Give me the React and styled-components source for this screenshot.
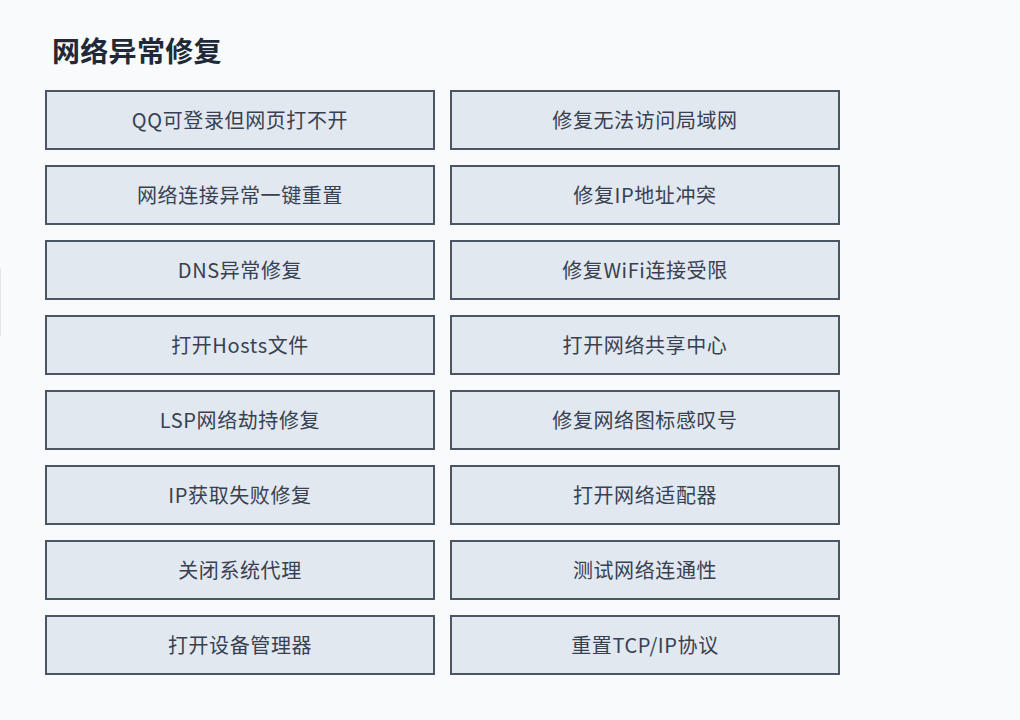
import React from "react";
import styled, { createGlobalStyle } from "styled-components";

const GlobalStyle = createGlobalStyle`
    html, body {
        margin: 0;
        padding: 0;
        background: #f8fafc;
    }
    body {
        font-family: "Noto Sans CJK SC", "Noto Sans", sans-serif;
    }
`;

const Page = styled.div`
    position: relative;
    min-height: 100vh;
    box-sizing: border-box;
    padding: 31px 45px;
    background: #f8fafc;
`;

// faint handle stuck to the left edge of the window
const SideHandle = styled.div`
    position: absolute;
    left: 0;
    top: 268px;
    width: 1px;
    height: 68px;
    background: #e3e6ea;
`;

const Title = styled.h2`
    margin: 0 0 21px;
    padding-left: 7px;
    font-size: 28px;
    line-height: 38px;
    font-weight: 700;
    color: #1f2937;
    letter-spacing: 0.3px;
`;

const Grid = styled.div`
    display: grid;
    grid-template-columns: repeat(2, 390px);
    grid-auto-rows: 60px;
    column-gap: 15px;
    row-gap: 15px;
`;

const ActionButton = styled.button`
    display: flex;
    align-items: center;
    justify-content: center;
    box-sizing: border-box;
    margin: 0;
    padding: 0 0 2px;
    border: 2px solid #4b5563;
    background: #e2e8f0;
    color: #374151;
    font-family: "Noto Sans CJK SC", "Noto Sans", sans-serif;
    font-size: 20px;
    letter-spacing: 0.6px;
    cursor: pointer;
    &:hover {
        background: #d6dee9;
    }
`;

const actions = [
    "QQ可登录但网页打不开",
    "修复无法访问局域网",
    "网络连接异常一键重置",
    "修复IP地址冲突",
    "DNS异常修复",
    "修复WiFi连接受限",
    "打开Hosts文件",
    "打开网络共享中心",
    "LSP网络劫持修复",
    "修复网络图标感叹号",
    "IP获取失败修复",
    "打开网络适配器",
    "关闭系统代理",
    "测试网络连通性",
    "打开设备管理器",
    "重置TCP/IP协议",
];

const App = () => {
    return (
        <>
            <GlobalStyle />
            <Page>
                <SideHandle />
                <Title>网络异常修复</Title>
                <Grid>
                    {actions.map((label) => (
                        <ActionButton key={label}>{label}</ActionButton>
                    ))}
                </Grid>
            </Page>
        </>
    );
};

export default App;
